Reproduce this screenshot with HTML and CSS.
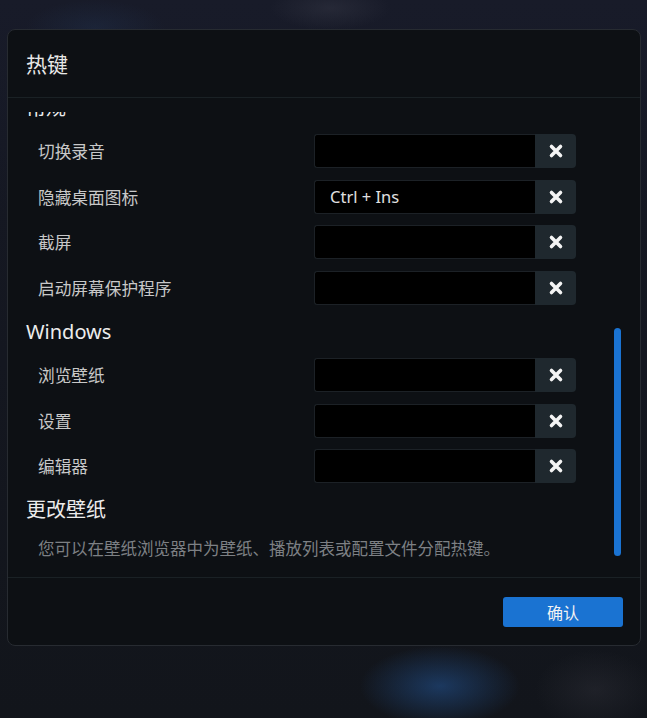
FILE: index.html
```html
<!DOCTYPE html>
<html lang="zh">
<head>
<meta charset="utf-8">
<title>热键</title>
<link rel="stylesheet" href="styles.css">
</head>
<body>
<div class="backdrop">
  <div class="dialog">
    <div class="dialog-header">
      <h1 class="dialog-title">热键</h1>
    </div>
    <div class="dialog-body">
      <div class="viewport">
        <div class="content">
          <section class="group">
            <h2 class="group-title">常规</h2>
            <div class="row">
              <span class="label">切换录音</span>
              <div class="keybox"><div class="field"></div><button class="clear"><svg viewBox="0 0 16 16"><path d="M3.5 3.5 12.5 12.5M12.5 3.5 3.5 12.5"/></svg></button></div>
            </div>
            <div class="row">
              <span class="label">隐藏桌面图标</span>
              <div class="keybox"><div class="field">Ctrl + Ins</div><button class="clear"><svg viewBox="0 0 16 16"><path d="M3.5 3.5 12.5 12.5M12.5 3.5 3.5 12.5"/></svg></button></div>
            </div>
            <div class="row">
              <span class="label">截屏</span>
              <div class="keybox"><div class="field"></div><button class="clear"><svg viewBox="0 0 16 16"><path d="M3.5 3.5 12.5 12.5M12.5 3.5 3.5 12.5"/></svg></button></div>
            </div>
            <div class="row">
              <span class="label">启动屏幕保护程序</span>
              <div class="keybox"><div class="field"></div><button class="clear"><svg viewBox="0 0 16 16"><path d="M3.5 3.5 12.5 12.5M12.5 3.5 3.5 12.5"/></svg></button></div>
            </div>
          </section>
          <section class="group">
            <h2 class="group-title">Windows</h2>
            <div class="row">
              <span class="label">浏览壁纸</span>
              <div class="keybox"><div class="field"></div><button class="clear"><svg viewBox="0 0 16 16"><path d="M3.5 3.5 12.5 12.5M12.5 3.5 3.5 12.5"/></svg></button></div>
            </div>
            <div class="row">
              <span class="label">设置</span>
              <div class="keybox"><div class="field"></div><button class="clear"><svg viewBox="0 0 16 16"><path d="M3.5 3.5 12.5 12.5M12.5 3.5 3.5 12.5"/></svg></button></div>
            </div>
            <div class="row">
              <span class="label">编辑器</span>
              <div class="keybox"><div class="field"></div><button class="clear"><svg viewBox="0 0 16 16"><path d="M3.5 3.5 12.5 12.5M12.5 3.5 3.5 12.5"/></svg></button></div>
            </div>
          </section>
          <section class="group">
            <h2 class="group-title">更改壁纸</h2>
            <p class="note">您可以在壁纸浏览器中为壁纸、播放列表或配置文件分配热键。</p>
          </section>
        </div>
      </div>
      <div class="scroll-thumb"></div>
    </div>
    <div class="dialog-footer">
      <button class="btn-primary">确认</button>
    </div>
  </div>
</div>
</body>
</html>
```
FILE: styles.css
```css
* { box-sizing: border-box; }
html, body { margin: 0; padding: 0; }
body {
  width: 647px;
  height: 718px;
  overflow: hidden;
  font-family: "Noto Sans", "Noto Sans CJK SC", sans-serif;
  background-color: #13161e;
  background-image:
    radial-gradient(ellipse 80px 40px at 440px 686px, rgba(34, 80, 140, 0.6), rgba(34, 80, 140, 0) 100%),
    radial-gradient(ellipse 60px 40px at 595px 690px, rgba(60, 60, 70, 0.3), rgba(60, 60, 70, 0) 100%),
    radial-gradient(ellipse 70px 28px at 95px 28px, rgba(36, 58, 92, 0.3), rgba(36, 58, 92, 0) 100%),
    radial-gradient(ellipse 60px 22px at 330px 8px, rgba(64, 66, 80, 0.35), rgba(64, 66, 80, 0) 100%),
    linear-gradient(180deg, #181b29 0%, #15182200 30%),
    linear-gradient(180deg, #161925 0%, #12151b 100%);
}
.backdrop {
  padding: 29px 6px 0 7px;
}
.dialog {
  width: 634px;
  height: 617px;
  background: #0d1014;
  border: 1px solid #272b31;
  border-radius: 8px;
  display: flex;
  flex-direction: column;
  overflow: hidden;
}
.dialog-header {
  height: 68px;
  flex: none;
  display: flex;
  align-items: center;
  padding-left: 18px;
  border-bottom: 1px solid #1a2125;
}
.dialog-title {
  margin: 0;
  font-size: 21px;
  font-weight: 400;
  color: #e8e8e8;
  line-height: 28px;
}
.dialog-body {
  flex: 1;
  position: relative;
  padding: 14px 0 7px 0;
  display: flex;
  flex-direction: column;
  min-height: 0;
}
.viewport {
  flex: 1;
  overflow: hidden;
}
.content {
  margin-top: -19px;
  padding: 0 64px 0 18px;
}
.group-title {
  margin: 12px 0 11px 0;
  font-size: 20px;
  font-weight: 400;
  line-height: 30px;
  color: #ececec;
}
.group:first-child .group-title { margin-top: 0; }
.row {
  display: flex;
  align-items: center;
  justify-content: space-between;
  padding-left: 12px;
  height: 34px;
  margin-bottom: 11.7px;
}
.group .row:last-child { margin-bottom: 0; }
.label {
  font-size: 16.7px;
  color: #c8c8c8;
}
.keybox {
  display: flex;
  width: 262px;
  height: 34px;
}
.field {
  flex: 1;
  background: #000;
  border: 1px solid #1c2126;
  border-right: none;
  border-radius: 3px 0 0 3px;
  font-size: 16.5px;
  color: #e0e0e0;
  line-height: 32px;
  padding-left: 15px;
}
.clear {
  width: 41px;
  height: 34px;
  border: none;
  padding: 0;
  background: #1f282e;
  border-radius: 0 4px 4px 0;
  display: flex;
  align-items: center;
  justify-content: center;
}
.clear svg {
  width: 16px;
  height: 16px;
  fill: none;
  stroke: #f4f4f4;
  stroke-width: 3.6;
  stroke-linecap: round;
}
.note {
  margin: 12px 0 0 12px;
  font-size: 16.5px;
  line-height: 24px;
  color: #7d8084;
  white-space: nowrap;
}
.scroll-thumb {
  position: absolute;
  right: 19px;
  top: 230px;
  width: 7px;
  height: 228px;
  border-radius: 4px;
  background: #1a73d2;
}
.dialog-footer {
  height: 68px;
  flex: none;
  border-top: 1px solid #1a2125;
  display: flex;
  align-items: center;
  justify-content: flex-end;
  padding-right: 17px;
}
.btn-primary {
  width: 120px;
  height: 30px;
  border: none;
  border-radius: 3px;
  background: #1a73d2;
  color: #f2f2f2;
  font-family: "Noto Sans CJK SC", sans-serif;
  font-size: 16px;
  padding: 0;
}
```
